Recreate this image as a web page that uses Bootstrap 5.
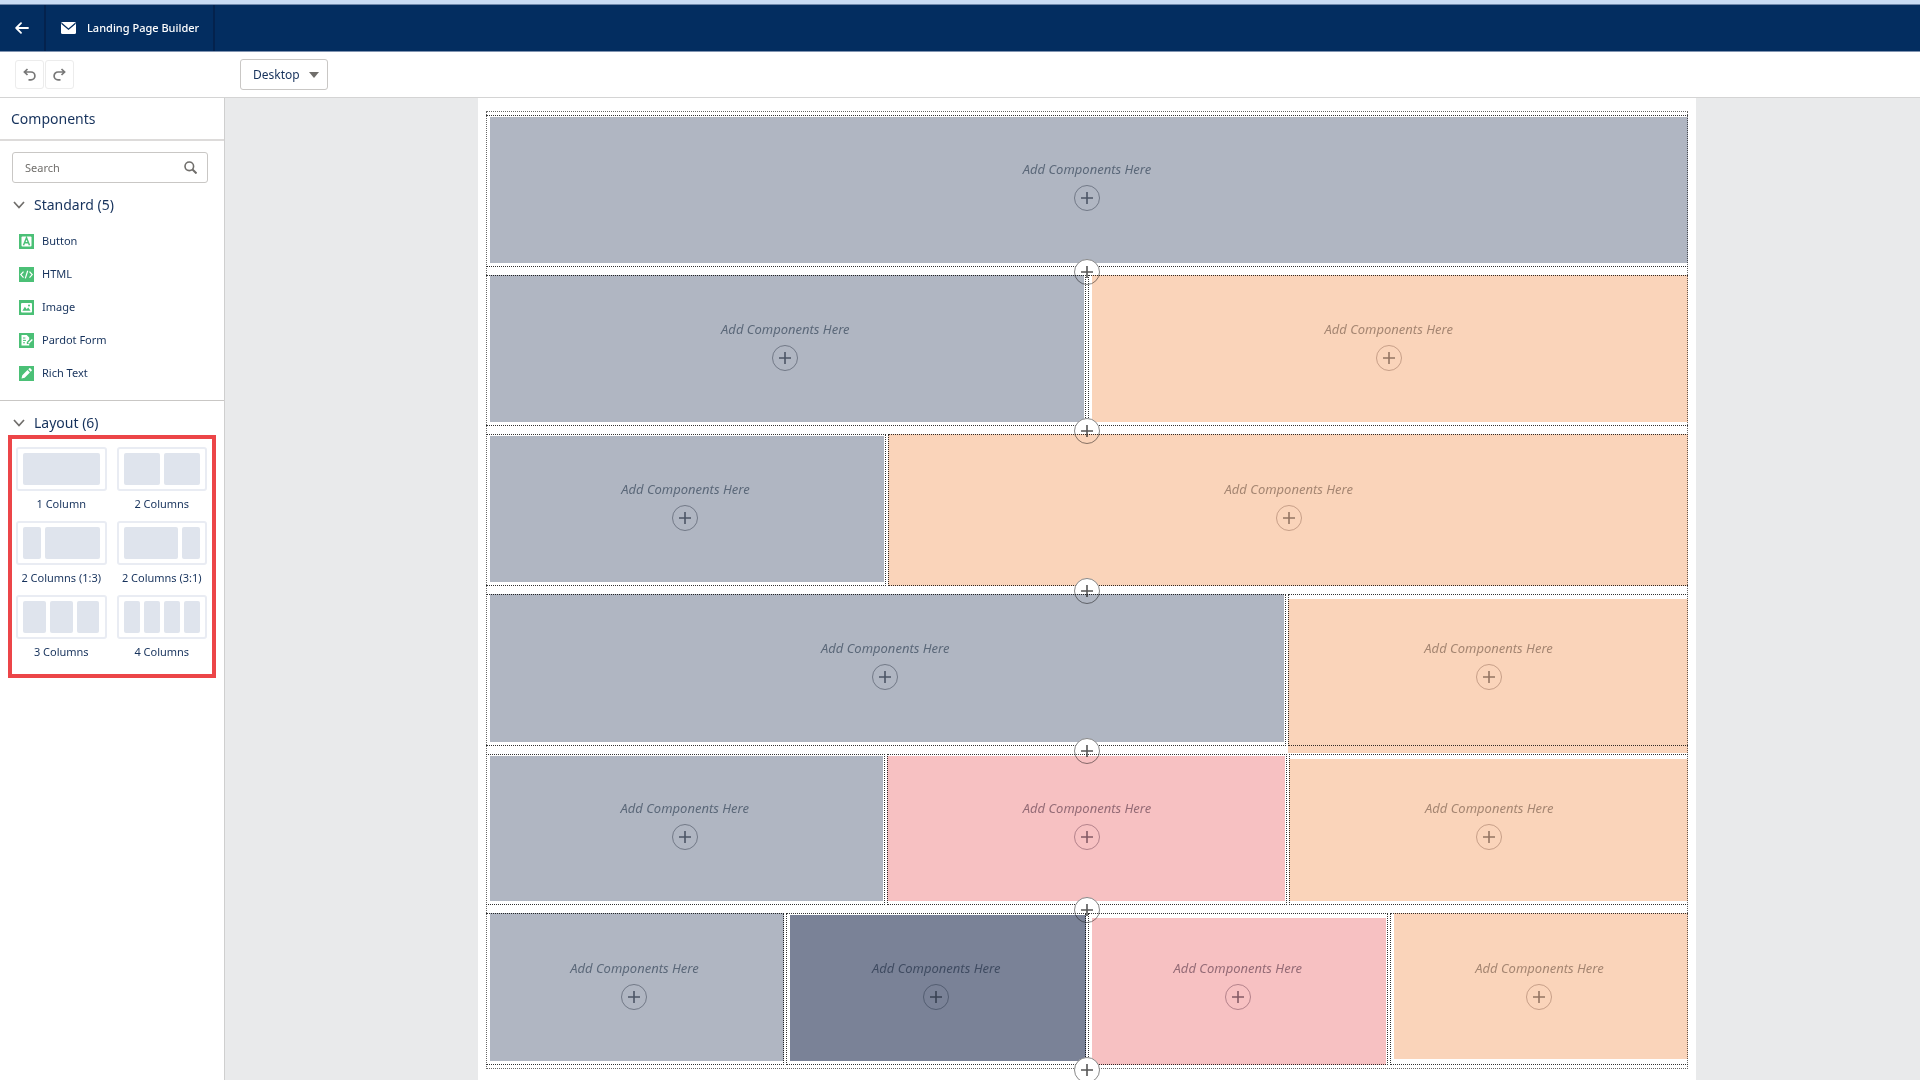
<!DOCTYPE html>
<html lang="en">
<head>
<meta charset="utf-8">
<meta name="viewport" content="width=device-width, initial-scale=1">
<title>Landing Page Builder</title>
<link href="https://cdn.jsdelivr.net/npm/bootstrap@5.3.0/dist/css/bootstrap.min.css" rel="stylesheet">
<style>
body{font-family:"Noto Sans","Open Sans",sans-serif;font-size:11px;line-height:20px;color:#16325c;background:#fff}
.top-strip{height:5px;background:#c9dcf4;border-bottom:1px solid #7189ac}
.app-bar{height:47px;background:#032d60;border-bottom:1px solid #8093b0}
.app-bar .seg{border-right:2px solid #04224d;color:#fff;font-weight:500}
.seg-back{width:46px}
.seg-title{padding:0 14px 0 15px;gap:11px}
.tools{height:46px;border-bottom:1px solid #d4d4d4;padding-left:15px;gap:1px}
.tool-btn{width:29px;height:29px;border:1px solid #ececec;border-radius:3px;background:#fff;color:#777;padding:0}
.device{width:88px;height:31px;margin-left:165px;border:1px solid #c9c7c5;border-radius:3px;font-size:12px;color:#16325c;padding:0 28px 0 12px;background-image:url("data:image/svg+xml,%3Csvg xmlns='http://www.w3.org/2000/svg' viewBox='0 0 10 6'%3E%3Cpath fill='%23706e6b' d='M0 0h10L5 6z'/%3E%3C/svg%3E");background-size:10px 6px;background-position:right 8px center}
.side{width:225px;border-right:1px solid #cfcfcf}
.side h1{font-size:14px;line-height:20px;font-weight:400;padding:11px 11px 10px;border-bottom:2px solid #dddbda}
.search-box{margin:11px 16px 0 12px}
.search-box input{height:31px;font-size:11px;border:1px solid #c9c7c5;border-radius:3px;padding:0 32px 0 12px}
.search-box input::placeholder{color:#706e6b}
.search-box svg{position:absolute;right:11px;top:9px}
.side h2{font-size:14px;line-height:20px;font-weight:400;padding-left:13px;gap:9px}
.parts{padding:16px 0 17px 19px;border-bottom:1px solid #c9c7c5;gap:13px}
.parts li{gap:8px}
.parts svg{position:relative}
.parts a,.tiles a{color:#16325c;text-decoration:none}
.red-frame{border:4px solid #ec4548;margin:2px 8px 0 8px;padding:8px 5px 12px 4px}
.tiles{display:grid;grid-template-columns:1fr 1fr;column-gap:10px;row-gap:7px}
.tile{height:44px;border:2px solid #e9ecf3;border-radius:3px;padding:4px 5px;gap:4px}
.tile i{background:#dfe4ed;border-radius:2px;flex:1 1 0}
.tile .w3{flex-grow:3}
.tiles a{line-height:20px;text-align:center}
.tiles span{display:block;margin:3px -4px 0;white-space:nowrap}
.stage{background:#e9eaeb}
.sheet{width:71.9%;margin-left:29px;background:#fff;padding:13px 8px 11px}
.frame{border:1px dotted #666;padding:3px 0;gap:8px;margin:0}
.band{flex:1 1 0;position:relative;gap:2px;margin:0 -1px}
.cell{flex:1 1 0;position:relative;border:1px dotted #333;padding-bottom:11px;min-width:0}
.cell:first-child{border-left:0;--l:4px}
.cell:nth-last-child(2){border-right:0;--r:0px}
.g2{flex-grow:2}
.cell p{position:relative;z-index:2;font-size:13px;font-style:italic;line-height:20px;margin:0 0 6px;color:#5b6879;white-space:nowrap}
.plus{width:26px;height:26px;border-radius:50%;border:1px solid #777;background:none;padding:0;color:#555}
.cell .plus{position:relative;z-index:2;border-color:#727987;color:#4c5566}
.orange p{color:#a58672}.orange .plus{border-color:#c79f88;color:#947563}
.pink p{color:#946b76}.pink .plus{border-color:#b4828b;color:#845b66}
.dark p{color:#3f4b61}.dark .plus{border-color:#535d71;color:#394253}
.join{position:absolute;left:50%;bottom:-18px;margin-left:-13px;background:#fff;border-color:#888}
/* Colour washes: laid over the dotted guides, edges set per cell through --t --r --b --l */
.wash{position:absolute;top:var(--t,1px);right:var(--r,1px);bottom:var(--b,3px);left:var(--l,3px);background:#b0b6c2;mix-blend-mode:multiply}
.orange .wash{background:#fad4ba}.pink .wash{background:#f7c1c2}.dark .wash{background:#7a8297}
.over-r{--r:-1px}
.over-t{--t:-1px}
.over-l{--l:-1px}
.over-b{--b:-1px}
.low-t{--t:4px}
.long-b{--b:-8px}
.gap-b{--b:5px}
svg{display:block;flex:none}
</style>
</head>
<body class="d-flex flex-column min-vh-100">
<svg width="0" height="0" class="position-absolute" aria-hidden="true"><symbol id="add" viewBox="0 0 12 12"><path d="M6 0v12M0 6h12" stroke="currentColor" stroke-width="1.6"/></symbol><symbol id="chev" viewBox="0 0 12 8"><path d="M1 1l5 5.5L11 1" fill="none" stroke="#706e6b" stroke-width="1.7"/></symbol></svg>
<div class="top-strip"></div>
<header class="app-bar d-flex">
<a href="#" class="seg seg-back d-flex align-items-center justify-content-center" aria-label="Back"><svg width="14" height="12" viewBox="0 0 14 12" fill="none" stroke="#fff" stroke-width="1.8" stroke-linecap="round" stroke-linejoin="round"><path d="M13 6H1.5M6 1.2L1.2 6 6 10.8"/></svg></a>
<div class="seg seg-title d-flex align-items-center"><svg width="15" height="12" viewBox="0 0 15 12"><rect width="15" height="12" rx="1.5" fill="#fff"/><path d="M.5 1.2l7 6 7-6" fill="none" stroke="#032d60" stroke-width="1.3"/></svg><span>Landing Page Builder</span></div>
</header>
<div class="tools d-flex align-items-center">
<button class="tool-btn d-flex align-items-center justify-content-center" aria-label="Undo"><svg width="13" height="13" viewBox="0 0 13 13" fill="none" stroke="currentColor" stroke-width="1.7"><path d="M4.5 1L1.4 4l3.1 3M1.6 4H8a3.9 3.9 0 010 7.8H5.5"/></svg></button>
<button class="tool-btn d-flex align-items-center justify-content-center" aria-label="Redo"><svg width="13" height="13" viewBox="0 0 13 13" fill="none" stroke="currentColor" stroke-width="1.7"><path d="M8.5 1l3.1 3-3.1 3M11.4 4H5a3.9 3.9 0 000 7.8h2.5"/></svg></button>
<select class="form-select device" aria-label="Device"><option>Desktop</option></select>
</div>
<div class="d-flex flex-grow-1">
<aside class="side flex-shrink-0">
<h1 class="mb-0">Components</h1>
<div class="search-box position-relative"><input type="text" class="form-control" placeholder="Search" aria-label="Search components"><svg width="13" height="13" viewBox="0 0 13 13" fill="none" stroke="#706e6b" stroke-width="1.6"><circle cx="5.3" cy="5.3" r="4.3"/><path d="M8.5 8.5l4 4" stroke-width="2"/></svg></div>
<h2 class="d-flex align-items-center mb-0 mt-2 pt-1"><svg width="12" height="8"><use href="#chev"/></svg>Standard (5)</h2>
<ul class="parts list-unstyled d-flex flex-column mb-0">
<li class="d-flex align-items-center"><svg width="15" height="15" viewBox="0 0 15 15"><path fill="#4bc076" d="M0 0h15v15H0z"/><rect x="2.5" y="2.5" width="10" height="10" rx="1" fill="#fff"/><path d="M4.5 11.2l3-7.4 3 7.4M5.6 8.8h3.8" fill="none" stroke="#4bc076" stroke-width="1.5"/></svg><a href="#">Button</a></li>
<li class="d-flex align-items-center"><svg width="15" height="15" viewBox="0 0 15 15"><path fill="#4bc076" d="M0 0h15v15H0z"/><path d="M4.5 4.6L1.8 7.6l2.7 3M10.5 4.6l2.7 3-2.7 3M8.7 3.8l-2.4 7.6" fill="none" stroke="#fff" stroke-width="1.2"/></svg><a href="#">HTML</a></li>
<li class="d-flex align-items-center"><svg width="15" height="15" viewBox="0 0 15 15"><path fill="#4bc076" d="M0 0h15v15H0z"/><rect x="2" y="3" width="11" height="9.4" rx="1" fill="#fff"/><path d="M3.4 10.8l2.5-4 1.8 2.4 1.5-1.8 2.4 3.4z" fill="#4bc076"/><circle cx="10" cy="5.6" r="1" fill="#4bc076"/></svg><a href="#">Image</a></li>
<li class="d-flex align-items-center"><svg width="15" height="15" viewBox="0 0 15 15"><path fill="#4bc076" d="M0 0h15v15H0z"/><path d="M2.5 2h5.2l2.5 2.4v2L7.8 9v2h1.8l.6-.6v2.2H2.5z" fill="#fff"/><path d="M4 5h2.4M4 7.4h3M4 9.8h2" stroke="#4bc076"/><path d="M9 9.8L12.8 6l1 1-3.8 3.7z" fill="#fff"/></svg><a href="#">Pardot Form</a></li>
<li class="d-flex align-items-center"><svg width="15" height="15" viewBox="0 0 15 15"><path fill="#4bc076" d="M0 0h15v15H0z"/><path d="M2.5 12.5l.8-3.2 5.2-5.2 2.4 2.4-5.2 5.2zM9.3 3.3l1-1q.5-.4 1 0l1.4 1.4q.4.5 0 1l-1 1z" fill="#fff"/></svg><a href="#">Rich Text</a></li>
</ul>
<h2 class="d-flex align-items-center mb-0 pt-2 mt-1"><svg width="12" height="8"><use href="#chev"/></svg>Layout (6)</h2>
<div class="red-frame"><div class="tiles">
<a href="#"><div class="tile d-flex"><i></i></div><span>1 Column</span></a>
<a href="#"><div class="tile d-flex"><i></i><i></i></div><span>2 Columns</span></a>
<a href="#"><div class="tile d-flex"><i></i><i class="w3"></i></div><span>2 Columns (1:3)</span></a>
<a href="#"><div class="tile d-flex"><i class="w3"></i><i></i></div><span>2 Columns (3:1)</span></a>
<a href="#"><div class="tile d-flex"><i></i><i></i><i></i></div><span>3 Columns</span></a>
<a href="#"><div class="tile d-flex"><i></i><i></i><i></i><i></i></div><span>4 Columns</span></a>
</div></div>
</aside>
<main class="stage flex-grow-1 d-flex justify-content-center">
<div class="sheet d-flex flex-column">
<div class="frame d-flex flex-column flex-grow-1">
<section class="band d-flex">
<div class="cell over-r d-flex flex-column align-items-center justify-content-center"><div class="wash"></div><p>Add Components Here</p><button class="plus d-flex align-items-center justify-content-center" aria-label="Add component"><svg width="12" height="12"><use href="#add"/></svg></button></div>
<button class="plus join d-flex align-items-center justify-content-center" aria-label="Add row"><svg width="12" height="12"><use href="#add"/></svg></button>
</section>
<section class="band d-flex">
<div class="cell over-t d-flex flex-column align-items-center justify-content-center"><div class="wash"></div><p>Add Components Here</p><button class="plus d-flex align-items-center justify-content-center" aria-label="Add component"><svg width="12" height="12"><use href="#add"/></svg></button></div>
<div class="cell orange over-t over-r d-flex flex-column align-items-center justify-content-center"><div class="wash"></div><p>Add Components Here</p><button class="plus d-flex align-items-center justify-content-center" aria-label="Add component"><svg width="12" height="12"><use href="#add"/></svg></button></div>
<button class="plus join d-flex align-items-center justify-content-center" aria-label="Add row"><svg width="12" height="12"><use href="#add"/></svg></button>
</section>
<section class="band d-flex">
<div class="cell d-flex flex-column align-items-center justify-content-center"><div class="wash"></div><p>Add Components Here</p><button class="plus d-flex align-items-center justify-content-center" aria-label="Add component"><svg width="12" height="12"><use href="#add"/></svg></button></div>
<div class="cell g2 orange over-t over-r over-b over-l d-flex flex-column align-items-center justify-content-center"><div class="wash"></div><p>Add Components Here</p><button class="plus d-flex align-items-center justify-content-center" aria-label="Add component"><svg width="12" height="12"><use href="#add"/></svg></button></div>
<button class="plus join d-flex align-items-center justify-content-center" aria-label="Add row"><svg width="12" height="12"><use href="#add"/></svg></button>
</section>
<section class="band d-flex">
<div class="cell g2 over-t d-flex flex-column align-items-center justify-content-center"><div class="wash"></div><p>Add Components Here</p><button class="plus d-flex align-items-center justify-content-center" aria-label="Add component"><svg width="12" height="12"><use href="#add"/></svg></button></div>
<div class="cell orange low-t over-r over-l long-b d-flex flex-column align-items-center justify-content-center"><div class="wash"></div><p>Add Components Here</p><button class="plus d-flex align-items-center justify-content-center" aria-label="Add component"><svg width="12" height="12"><use href="#add"/></svg></button></div>
<button class="plus join d-flex align-items-center justify-content-center" aria-label="Add row"><svg width="12" height="12"><use href="#add"/></svg></button>
</section>
<section class="band d-flex">
<div class="cell d-flex flex-column align-items-center justify-content-center"><div class="wash"></div><p>Add Components Here</p><button class="plus d-flex align-items-center justify-content-center" aria-label="Add component"><svg width="12" height="12"><use href="#add"/></svg></button></div>
<div class="cell pink over-l d-flex flex-column align-items-center justify-content-center"><div class="wash"></div><p>Add Components Here</p><button class="plus d-flex align-items-center justify-content-center" aria-label="Add component"><svg width="12" height="12"><use href="#add"/></svg></button></div>
<div class="cell orange low-t over-r over-l d-flex flex-column align-items-center justify-content-center"><div class="wash"></div><p>Add Components Here</p><button class="plus d-flex align-items-center justify-content-center" aria-label="Add component"><svg width="12" height="12"><use href="#add"/></svg></button></div>
<button class="plus join d-flex align-items-center justify-content-center" aria-label="Add row"><svg width="12" height="12"><use href="#add"/></svg></button>
</section>
<section class="band d-flex">
<div class="cell over-t over-r d-flex flex-column align-items-center justify-content-center"><div class="wash"></div><p>Add Components Here</p><button class="plus d-flex align-items-center justify-content-center" aria-label="Add component"><svg width="12" height="12"><use href="#add"/></svg></button></div>
<div class="cell dark over-r d-flex flex-column align-items-center justify-content-center"><div class="wash"></div><p>Add Components Here</p><button class="plus d-flex align-items-center justify-content-center" aria-label="Add component"><svg width="12" height="12"><use href="#add"/></svg></button></div>
<div class="cell pink low-t over-b d-flex flex-column align-items-center justify-content-center"><div class="wash"></div><p>Add Components Here</p><button class="plus d-flex align-items-center justify-content-center" aria-label="Add component"><svg width="12" height="12"><use href="#add"/></svg></button></div>
<div class="cell orange over-t over-r gap-b d-flex flex-column align-items-center justify-content-center"><div class="wash"></div><p>Add Components Here</p><button class="plus d-flex align-items-center justify-content-center" aria-label="Add component"><svg width="12" height="12"><use href="#add"/></svg></button></div>
<button class="plus join d-flex align-items-center justify-content-center" aria-label="Add row"><svg width="12" height="12"><use href="#add"/></svg></button>
</section>
</div>
</div>
</main>
</div>
<script src="https://cdn.jsdelivr.net/npm/bootstrap@5.3.0/dist/js/bootstrap.bundle.min.js"></script>
</body>
</html>
